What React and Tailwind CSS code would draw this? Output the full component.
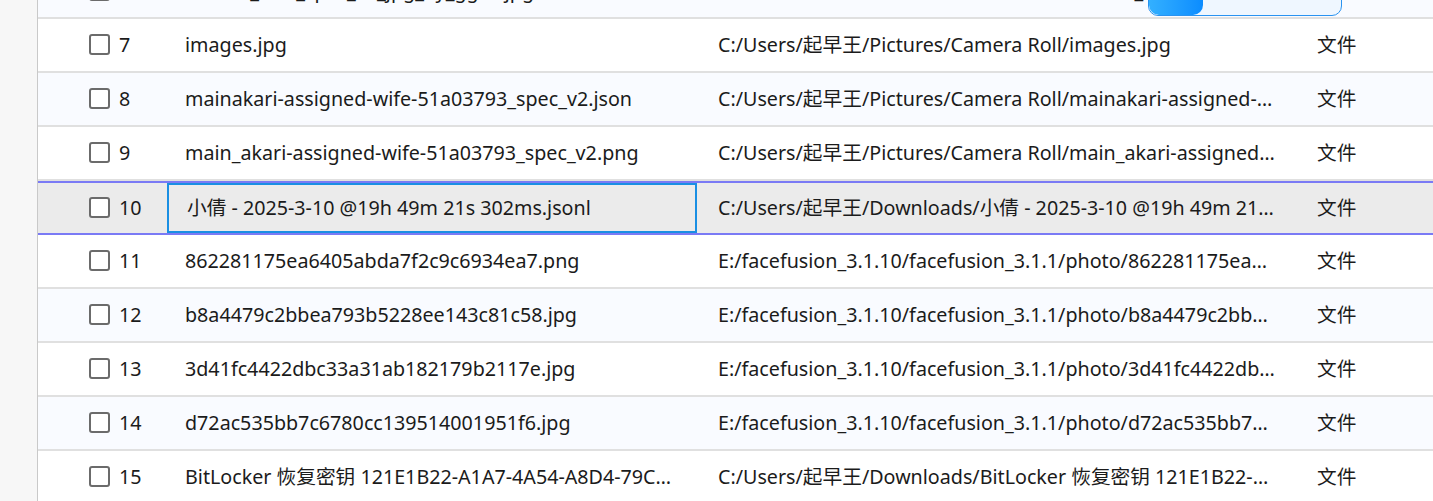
import React from "react";

// rows of the file list
const rows = [
  {
    id: 6,
    name: "kasane_teto_spec_v2_jpg_by_ggxx.jpg",
    path: "C:/Users/起早王/Pictures/Camera Roll/kasane_teto_spec_v2.jpg",
  },
  {
    id: 7,
    name: "images.jpg",
    path: "C:/Users/起早王/Pictures/Camera Roll/images.jpg",
  },
  {
    id: 8,
    name: "mainakari-assigned-wife-51a03793_spec_v2.json",
    path: "C:/Users/起早王/Pictures/Camera Roll/mainakari-assigned-wife-51a03793_spec_v2.json",
  },
  {
    id: 9,
    name: "main_akari-assigned-wife-51a03793_spec_v2.png",
    path: "C:/Users/起早王/Pictures/Camera Roll/main_akari-assigned-wife-51a03793_spec_v2.png",
  },
  {
    id: 10,
    name: "小倩 - 2025-3-10 @19h 49m 21s 302ms.jsonl",
    path: "C:/Users/起早王/Downloads/小倩 - 2025-3-10 @19h 49m 21s 302ms.jsonl",
    selected: true,
  },
  {
    id: 11,
    name: "862281175ea6405abda7f2c9c6934ea7.png",
    path: "E:/facefusion_3.1.10/facefusion_3.1.1/photo/862281175ea6405abda7f2c9c6934ea7.png",
  },
  {
    id: 12,
    name: "b8a4479c2bbea793b5228ee143c81c58.jpg",
    path: "E:/facefusion_3.1.10/facefusion_3.1.1/photo/b8a4479c2bbea793b5228ee143c81c58.jpg",
  },
  {
    id: 13,
    name: "3d41fc4422dbc33a31ab182179b2117e.jpg",
    path: "E:/facefusion_3.1.10/facefusion_3.1.1/photo/3d41fc4422dbc33a31ab182179b2117e.jpg",
  },
  {
    id: 14,
    name: "d72ac535bb7c6780cc139514001951f6.jpg",
    path: "E:/facefusion_3.1.10/facefusion_3.1.1/photo/d72ac535bb7c6780cc139514001951f6.jpg",
  },
  {
    id: 15,
    name: "BitLocker 恢复密钥 121E1B22-A1A7-4A54-A8D4-79C5E3B1F0A2.TXT",
    path: "C:/Users/起早王/Downloads/BitLocker 恢复密钥 121E1B22-A1A7-4A54-A8D4-79C5E3B1F0A2.TXT",
  },
];

function classNames(...classes) {
  return classes.filter(Boolean).join(" ");
}

const Row = ({ row }) => {
  const even = row.id % 2 === 0;
  return (
    <div
      className={classNames(
        "relative flex h-[54px] items-center",
        row.selected
          ? "bg-[#ebebeb] border-y-2 border-[#7a7af5]"
          : classNames(
              "border-b-2 border-[#e0e0e0]",
              even ? "bg-[#f9fbff]" : "bg-white"
            )
      )}
    >
      {/* checkbox + index */}
      <div className="flex w-[129px] shrink-0 items-center pl-[51px]">
        <span className="h-[21px] w-[21px] shrink-0 rounded-[3px] border-2 border-[#6b6b6b] bg-white" />
        <span className="ml-[9px]">{row.id}</span>
      </div>
      {/* name */}
      <div
        className={classNames(
          "flex h-full w-[530px] min-w-0 shrink-0 items-center overflow-hidden pl-[18px] pr-[20px]",
          row.selected && "border-2 border-[#1a8fe3]"
        )}
      >
        <span className="truncate">{row.name}</span>
      </div>
      {/* path */}
      <div className="flex h-full w-[600px] min-w-0 shrink-0 items-center overflow-hidden pl-[21px] pr-[20px]">
        <span className="truncate">{row.path}</span>
      </div>
      {/* type */}
      <div className="pl-[20px]">文件</div>

      {row.id === 6 && (
        <div className="absolute bottom-[1px] left-[1110px] flex h-[40px] w-[194px] overflow-hidden rounded-b-[10px] border border-[#2a93f0] bg-[#eff7ff]">
          <div className="h-full w-[54px] rounded-b-[10px] bg-gradient-to-r from-[#33b0ff] to-[#0a8cff]" />
        </div>
      )}
    </div>
  );
};

export default function App() {
  return (
    <div
      className="flex h-[501px] w-[1433px] overflow-hidden bg-white text-[19.7px] text-[#1b1b1b]"
      style={{ fontFamily: '"Noto Sans", "Noto Sans CJK SC", sans-serif' }}
    >
      {/* left gutter */}
      <div className="w-[38px] shrink-0 border-r border-[#c9c9c9] bg-[#f7f7f7]" />
      {/* list */}
      <div className="flex-1 overflow-hidden">
        <div className="-mt-[35px]">
          {rows.map((row) => (
            <Row key={row.id} row={row} />
          ))}
        </div>
      </div>
    </div>
  );
}
